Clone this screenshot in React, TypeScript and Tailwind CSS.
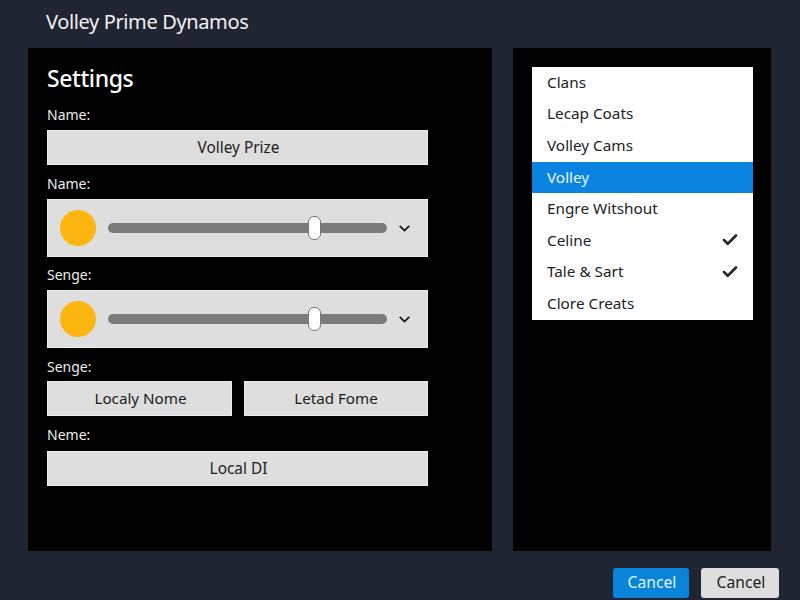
import React from "react";
import { Check, ChevronDown } from "lucide-react";

const items = [
  { name: "Clans" },
  { name: "Lecap Coats" },
  { name: "Volley Cams" },
  { name: "Volley", active: true },
  { name: "Engre Witshout" },
  { name: "Celine", checked: true },
  { name: "Tale & Sart", checked: true },
  { name: "Clore Creats" },
];

function Label({ children, className }: { children: React.ReactNode; className: string }) {
  return <div className={`text-[14px] leading-[20px] text-[#ececec] ${className}`}>{children}</div>;
}

function Field({ text }: { text: string }) {
  return (
    <div className="flex h-[35px] w-[381px] items-center justify-center border border-[#ececec] bg-[#dedede] pl-[2px] text-[15.4px] text-[#1c1c1c]">
      {text}
    </div>
  );
}

function SliderRow() {
  return (
    <div className="flex h-[58px] w-[381px] items-center border border-[#ececec] bg-[#dedede] pl-[12px]">
      <div className="h-[36px] w-[36px] rounded-full bg-[#fdb60f]" />
      <div className="relative ml-[12px] h-[10px] w-[279px] rounded-full bg-[#7b7b7b]">
        <div className="absolute left-[200px] top-[-7px] h-[24px] w-[13px] rounded-[6px] border border-[#777777] bg-white" />
      </div>
      <ChevronDown className="ml-[9px] text-[#1c1c1c]" size={17} strokeWidth={2.6} />
    </div>
  );
}

export default function App() {
  return (
    <div className="flex h-[600px] w-[800px] flex-col overflow-hidden bg-[#1f2533] font-['Noto_Sans',sans-serif]">
      <div className="flex h-[48px] items-center pb-[4px] pl-[46px] text-[20px] tracking-[-0.37px] text-[#f2f2f2]">
        Volley Prime Dynamos
      </div>

      <div className="flex gap-[21px] pl-[28px]">
        <div className="h-[503px] w-[464px] bg-black pl-[19px] pt-[14px]">
          <div className="text-[23px] font-medium leading-[32px] tracking-[-0.4px] text-white">Settings</div>
          <Label className="mt-[11px] mb-[5px]">Name:</Label>
          <Field text="Volley Prize" />
          <Label className="mt-[9px] mb-[5px]">Name:</Label>
          <SliderRow />
          <Label className="mt-[8px] mb-[5px]">Senge:</Label>
          <SliderRow />
          <Label className="mt-[9px] mb-[4px]">Senge:</Label>
          <div className="flex w-[381px] gap-[12px]">
            <div className="flex h-[35px] w-[185px] items-center justify-center border border-[#ececec] bg-[#dedede] pl-[2px] text-[15.2px] text-[#1c1c1c]">
              Localy Nome
            </div>
            <div className="flex h-[35px] w-[184px] items-center justify-center border border-[#ececec] bg-[#dedede] text-[15.2px] text-[#1c1c1c]">
              Letad Fome
            </div>
          </div>
          <Label className="mt-[9px] mb-[6px]">Neme:</Label>
          <Field text="Local DI" />
        </div>

        <div className="h-[503px] w-[258px] bg-black pl-[19px] pt-[19px]">
          <div className="w-[221px] bg-white">
            {items.map((item) => (
              <div
                key={item.name}
                className={`flex h-[31.6px] items-center justify-between pb-[1px] pl-[15px] pr-[14px] text-[15.3px] ${
                  item.active ? "bg-[#0a84e0] text-[#e6f6ff]" : "text-[#222222]"
                }`}
              >
                <span>{item.name}</span>
                {item.checked && <Check className="text-[#2a2a2a]" size={18} strokeWidth={3.6} />}
              </div>
            ))}
          </div>
        </div>
      </div>

      <div className="flex justify-end gap-[12px] pr-[21px] pt-[17px]">
        <button className="flex h-[30px] w-[76px] items-center justify-center rounded-[3px] bg-[#0a84d8] pl-[2px] text-[15.7px] text-[#dff4ff]">
          Cancel
        </button>
        <button className="flex h-[30px] w-[78px] items-center justify-center rounded-[3px] bg-[#dedede] pl-[2px] text-[15.7px] text-[#1c1c1c]">
          Cancel
        </button>
      </div>
    </div>
  );
}
